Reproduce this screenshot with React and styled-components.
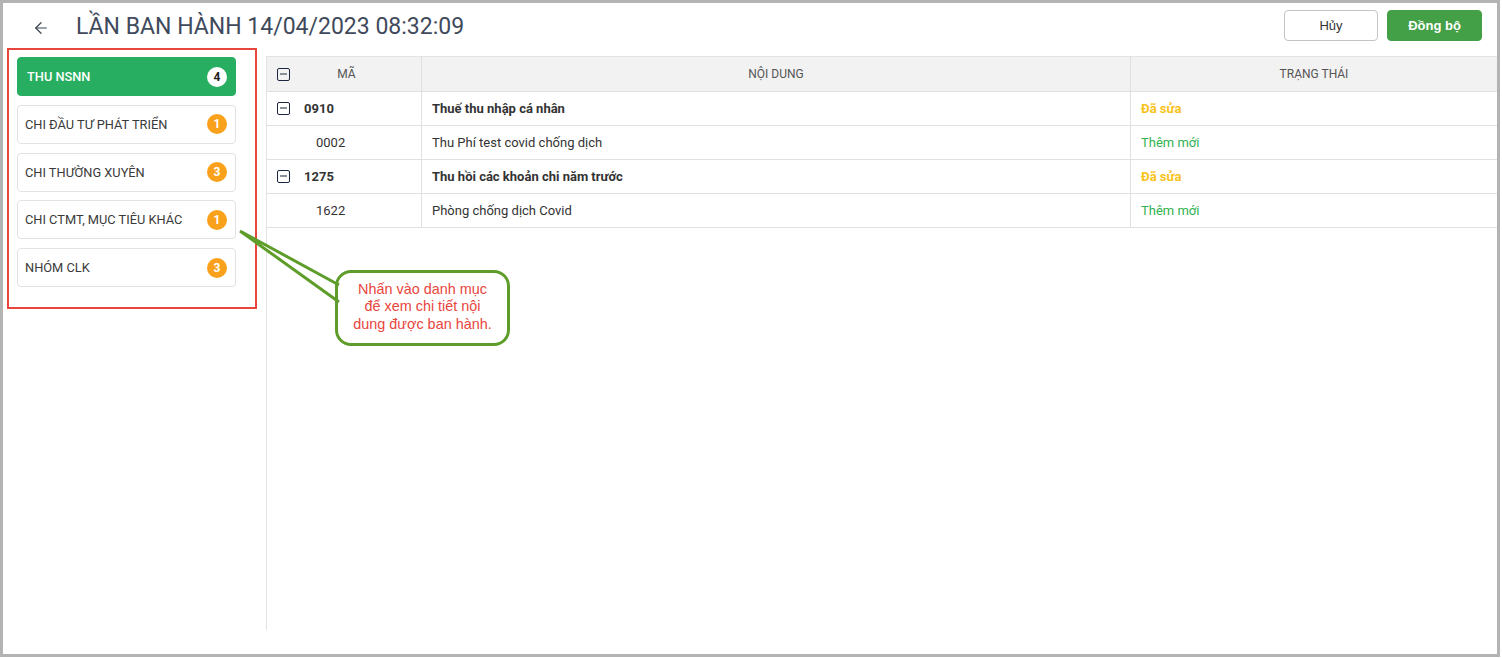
import React from "react";
import styled, { createGlobalStyle } from "styled-components";
import { ArrowLeft } from "lucide-react";

const GlobalStyle = createGlobalStyle`
  html, body {
    margin: 0;
    padding: 0;
    background: #fff;
  }
  * {
    box-sizing: border-box;
  }
`;

const categories = [
  { name: "THU NSNN", count: 4, active: true },
  { name: "CHI ĐẦU TƯ PHÁT TRIỂN", count: 1 },
  { name: "CHI THƯỜNG XUYÊN", count: 3 },
  { name: "CHI CTMT, MỤC TIÊU KHÁC", count: 1 },
  { name: "NHÓM CLK", count: 3 },
];

const rows = [
  { code: "0910", content: "Thuế thu nhập cá nhân", status: "Đã sửa", parent: true },
  { code: "0002", content: "Thu Phí test covid chống dịch", status: "Thêm mới" },
  { code: "1275", content: "Thu hồi các khoản chi năm trước", status: "Đã sửa", parent: true },
  { code: "1622", content: "Phòng chống dịch Covid", status: "Thêm mới" },
];

function App() {
  return (
    <>
      <GlobalStyle />
      <Frame>
        <Header>
          <TitleBox>
            <BackButton>
              <ArrowLeft size={18} strokeWidth={1.6} />
            </BackButton>
            <Title>LẦN BAN HÀNH 14/04/2023 08:32:09</Title>
          </TitleBox>
          <Actions>
            <Button>Hủy</Button>
            <Button primary>Đồng bộ</Button>
          </Actions>
        </Header>

        <Body>
          <Sidebar>
            {categories.map((c) => (
              <Category key={c.name} active={c.active}>
                <span>{c.name}</span>
                <Badge active={c.active}>{c.count}</Badge>
              </Category>
            ))}
          </Sidebar>

          <Main>
            <Table>
              <HeadRow>
                <HeadCell first>
                  <Collapse />
                  <HeadLabel>MÃ</HeadLabel>
                </HeadCell>
                <HeadCell>
                  <HeadLabel>NỘI DUNG</HeadLabel>
                </HeadCell>
                <HeadCell last>
                  <HeadLabel>TRẠNG THÁI</HeadLabel>
                </HeadCell>
              </HeadRow>
              {rows.map((r) => (
                <Row key={r.code}>
                  <CodeCell parent={r.parent}>
                    {r.parent && <Collapse />}
                    {r.code}
                  </CodeCell>
                  <Cell bold={r.parent}>{r.content}</Cell>
                  <StatusCell edited={r.status === "Đã sửa"}>{r.status}</StatusCell>
                </Row>
              ))}
            </Table>
          </Main>
        </Body>

        <Highlight />
        <Pointer width="110" height="90" viewBox="0 0 110 90">
          <polygon points="4,5 106,61 106,80" fill="#fff" />
          <polyline
            points="103,59 4,5 103,76"
            fill="none"
            stroke="#5e9d2a"
            strokeWidth="3"
            strokeLinejoin="miter"
          />
        </Pointer>
        <Callout>
          Nhấn vào danh mục
          <br />
          để xem chi tiết nội
          <br />
          dung được ban hành.
        </Callout>
      </Frame>
    </>
  );
}

export default App;

const Frame = styled.div`
  position: relative;
  width: 1500px;
  height: 657px;
  border: 3px solid #b3b3b3;
  background: #fff;
  font-family: Roboto, "Liberation Sans", sans-serif;
  color: #333;
  overflow: hidden;
`;

const Header = styled.header`
  display: flex;
  align-items: flex-start;
  justify-content: space-between;
  height: 53px;
  padding: 7px 15px 0 29px;
`;

const TitleBox = styled.div`
  display: flex;
  align-items: center;
  gap: 26px;
  margin-top: 3px;
`;

const BackButton = styled.div`
  display: flex;
  align-items: center;
  color: #3b4453;
  padding-top: 3px;
`;

const Title = styled.h1`
  margin: 0;
  font-size: 23px;
  font-weight: 400;
  color: #3f4a5c;
`;

const Actions = styled.div`
  display: flex;
  gap: 9px;
`;

const Button = styled.button`
  width: ${(p) => (p.primary ? "95px" : "94px")};
  height: 31px;
  border-radius: 4px;
  border: 1px solid ${(p) => (p.primary ? "#43a047" : "#c4c4c4")};
  background: ${(p) => (p.primary ? "#43a047" : "#fff")};
  color: ${(p) => (p.primary ? "#fff" : "#333")};
  font-family: "Liberation Sans", Arial, sans-serif;
  font-size: 13px;
  font-weight: ${(p) => (p.primary ? 700 : 400)};
  cursor: pointer;
`;

const Body = styled.div`
  display: flex;
  height: 574px;
`;

const Sidebar = styled.aside`
  width: 264px;
  flex-shrink: 0;
  border-right: 1px solid #e3e3e3;
  padding: 1px 30px 0 14px;
  display: flex;
  flex-direction: column;
  gap: 8.75px;
`;

const Category = styled.div`
  display: flex;
  align-items: center;
  justify-content: space-between;
  height: 39px;
  padding: 0 8px 0 ${(p) => (p.active ? "9px" : "7px")};
  border-radius: 4px;
  border: 1px solid ${(p) => (p.active ? "#27ae60" : "#e2e2e2")};
  background: ${(p) => (p.active ? "#27ae60" : "#fff")};
  color: ${(p) => (p.active ? "#fff" : "#3a3a3a")};
  font-size: 12.8px;
  font-weight: ${(p) => (p.active ? 500 : 400)};
`;

const Badge = styled.span`
  width: 20px;
  height: 20px;
  border-radius: 50%;
  display: flex;
  align-items: center;
  justify-content: center;
  background: ${(p) => (p.active ? "#fff" : "#f9a11b")};
  color: ${(p) => (p.active ? "#222" : "#fff")};
  font-size: 12px;
  font-weight: 700;
`;

const Main = styled.main`
  flex: 1;
`;

const Table = styled.div`
  display: grid;
  grid-template-columns: 155px 709px 1fr;
  border-top: 1px solid #e3e3e3;
`;

const HeadRow = styled.div`
  display: contents;
`;

const HeadCell = styled.div`
  display: flex;
  align-items: center;
  height: 35px;
  padding: ${(p) => (p.first ? "0 18px 0 10px" : "0")};
  background: #f2f2f2;
  border-bottom: 1px solid #e0e0e0;
  border-right: ${(p) => (p.last ? "none" : "1px solid #e0e0e0")};
`;

const HeadLabel = styled.span`
  flex: 1;
  text-align: center;
  font-size: 12px;
  color: #555;
`;

const Row = styled.div`
  display: contents;
`;

const Cell = styled.div`
  display: flex;
  align-items: center;
  height: 34px;
  padding-left: 10px;
  border-bottom: 1px solid #e0e0e0;
  border-right: 1px solid #e0e0e0;
  font-size: 13px;
  font-weight: ${(p) => (p.bold ? 700 : 400)};
  color: #333;
`;

const CodeCell = styled(Cell)`
  gap: 14px;
  padding-left: ${(p) => (p.parent ? "10px" : "49px")};
  font-weight: ${(p) => (p.parent ? 700 : 400)};
`;

const StatusCell = styled(Cell)`
  border-right: none;
  color: ${(p) => (p.edited ? "#f9c21a" : "#2fb24f")};
  font-weight: ${(p) => (p.edited ? 700 : 400)};
`;

const Collapse = styled.span`
  position: relative;
  width: 13px;
  height: 13px;
  flex-shrink: 0;
  border: 1.6px solid #1d2742;
  border-radius: 2px;

  &::after {
    content: "";
    position: absolute;
    left: 2px;
    right: 2px;
    top: 4.3px;
    height: 1.8px;
    background: #8a8f9a;
  }
`;

const Highlight = styled.div`
  position: absolute;
  left: 4px;
  top: 45px;
  width: 250px;
  height: 261px;
  border: 2px solid #e8463c;
  pointer-events: none;
`;

const Pointer = styled.svg`
  position: absolute;
  left: 233px;
  top: 223px;
  overflow: visible;
`;

const Callout = styled.div`
  position: absolute;
  left: 332px;
  top: 267px;
  width: 175px;
  height: 76px;
  border: 3px solid #5e9d2a;
  border-radius: 16px;
  background: transparent;
  display: flex;
  align-items: center;
  justify-content: center;
  text-align: center;
  font-family: "Liberation Sans", Arial, sans-serif;
  font-size: 14.4px;
  line-height: 17.5px;
  color: #e8453c;
  padding-bottom: 2px;
`;
